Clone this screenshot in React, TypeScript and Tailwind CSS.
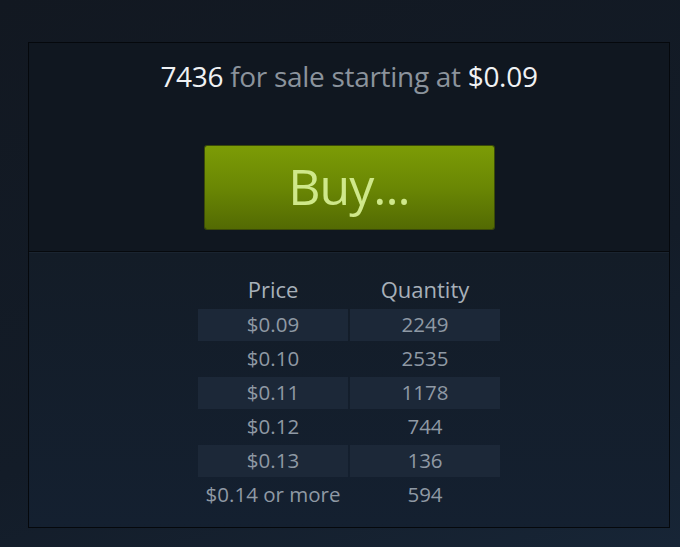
import React from "react";

const rows = [
  ["$0.09", "2249"],
  ["$0.10", "2535"],
  ["$0.11", "1178"],
  ["$0.12", "744"],
  ["$0.13", "136"],
  ["$0.14 or more", "594"],
];

export default function App() {
  return (
    <div
      className="w-[680px] h-[547px] overflow-hidden bg-[linear-gradient(160deg,#121821_0%,#131c28_60%,#172536_100%)] pt-[42px] pl-[28px]"
      style={{ fontFamily: '"Open Sans", "Noto Sans", sans-serif' }}
    >
      <div className="w-[642px] h-[486px] border border-[#05080c] flex flex-col shadow-[inset_1px_1px_0_#1c2530]">
        <div className="h-[209px] bg-[#101720] flex flex-col items-center border-b border-[#06090d]">
          <div className="mt-[15px] h-[36px] leading-[36px] text-[28px] tracking-[-0.3px]">
            <span className="text-[#f0f2f4]">7436</span>
            <span className="text-[#8b939c]"> for sale starting at </span>
            <span className="text-[#f0f2f4]">$0.09</span>
          </div>
          <div className="mt-[52px] w-[289px] h-[83px] rounded-[2px] bg-[linear-gradient(to_bottom,#7c9c06_0%,#6a8704_50%,#536a03_100%)] shadow-[0_0_0_1px_#3a4a08] flex items-center justify-center">
            <span className="text-[#cfe88a] text-[50px] leading-none tracking-[-1px] -mt-[4px]">Buy...</span>
          </div>
        </div>
        <div className="flex-1 bg-[linear-gradient(to_bottom,#131c27,#142030)] border-t border-[#1a2430] flex flex-col items-center pt-[20px]">
          <div className="grid grid-cols-[150px_150px] gap-x-[2px] gap-y-[2px]">
            <div className="h-[34px] flex items-center justify-center text-[22px] text-[#a7b0b9] -translate-y-[1px]">Price</div>
            <div className="h-[34px] flex items-center justify-center text-[22px] text-[#a7b0b9] -translate-y-[1px]">Quantity</div>
            {rows.map(([p, q], i) => (
              <React.Fragment key={p}>
                <div
                  className={`h-[32px] flex items-center justify-center text-[20.5px] text-[#8f99a4] ${
                    i % 2 === 0 ? "bg-[#1c2838]" : ""
                  }`}
                >
                  <span className="-mt-[2px]">{p}</span>
                </div>
                <div
                  className={`h-[32px] flex items-center justify-center text-[20.5px] text-[#8f99a4] ${
                    i % 2 === 0 ? "bg-[#1c2838]" : ""
                  }`}
                >
                  <span className="-mt-[2px]">{q}</span>
                </div>
              </React.Fragment>
            ))}
          </div>
        </div>
      </div>
    </div>
  );
}
